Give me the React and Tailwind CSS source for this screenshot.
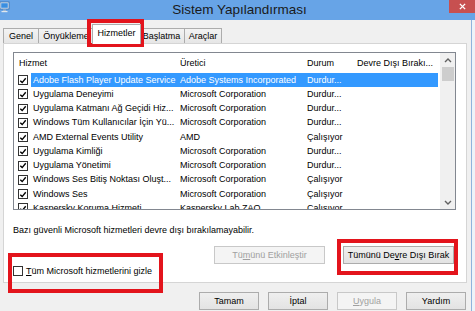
import React from "react";

const rows = [
  ["Adobe Flash Player Update Service", "Adobe Systems Incorporated", "Durdur..."],
  ["Uygulama Deneyimi", "Microsoft Corporation", "Durdur..."],
  ["Uygulama Katmanı Ağ Geçidi Hiz...", "Microsoft Corporation", "Durdur..."],
  ["Windows Tüm Kullanıcılar İçin Yü...", "Microsoft Corporation", "Durdur..."],
  ["AMD External Events Utility", "AMD", "Çalışıyor"],
  ["Uygulama Kimliği", "Microsoft Corporation", "Durdur..."],
  ["Uygulama Yönetimi", "Microsoft Corporation", "Durdur..."],
  ["Windows Ses Bitiş Noktası Oluşt...", "Microsoft Corporation", "Çalışıyor"],
  ["Windows Ses", "Microsoft Corporation", "Çalışıyor"],
  ["Kaspersky Koruma Hizmeti", "Kaspersky Lab ZAO", "Çalışıyor"],
];

function Check({ checked }) {
  return (
    <span className="flex h-[10px] w-[10px] shrink-0 items-center justify-center border border-[#333] bg-white">
      {checked && (
        <svg viewBox="0 0 10 10" className="h-[9px] w-[9px]">
          <path d="M1.6 5.2 L4 7.6 L8.4 2.2" stroke="#000" strokeWidth="1.7" fill="none" />
        </svg>
      )}
    </span>
  );
}

function Tab({ label, width, selected }) {
  if (selected) {
    return (
      <div
        className="relative z-10 -mx-[2px] -mb-px flex h-[20px] items-start justify-center border border-b-0 border-[#acacac] bg-white pt-[4px]"
        style={{ width: width + 4 }}
      >
        {label}
      </div>
    );
  }
  return (
    <div
      className="-ml-px flex h-[15px] items-center justify-center border border-b-0 border-[#acacac] bg-gradient-to-b from-[#f3f3f3] to-[#e6e6e6] pt-px first:ml-0"
      style={{ width }}
    >
      {label}
    </div>
  );
}

function Btn({ children, className = "", disabled }) {
  return (
    <div
      className={
        "flex h-[18px] items-center justify-center border " +
        (disabled
          ? "border-[#c8c8c8] bg-[#f4f4f4] text-[#a0a0a0] "
          : "border-[#acacac] bg-gradient-to-b from-[#efefef] to-[#e3e3e3] ") +
        className
      }
    >
      {children}
    </div>
  );
}

function Chevron({ down }) {
  return (
    <svg viewBox="0 0 8 5" className="h-[5px] w-[8px]">
      <path
        d={down ? "M1 1 L4 4 L7 1" : "M1 4 L4 1 L7 4"}
        stroke="#606060"
        strokeWidth="1.4"
        fill="none"
      />
    </svg>
  );
}

export default function App() {
  return (
    <div className="relative h-[311px] w-[475px] overflow-hidden bg-[#f0f0f0] font-['Liberation_Sans',Arial,sans-serif] text-[9px] leading-none text-black">
      {/* title bar */}
      <div className="flex h-[20px] items-start bg-[#67a4e7]">
        <svg viewBox="0 0 10 12" className="mt-[1px] h-[12px] w-[10px] shrink-0">
          <rect x="0" y="1" width="9" height="7" fill="#e9f2fb" stroke="#3d6ea8" strokeWidth="0.8" />
          <rect x="1.2" y="2.2" width="6.6" height="4.6" fill="#3a8ee0" />
          <rect x="3" y="8.5" width="3" height="1.5" fill="#9fb6cf" />
          <rect x="1.5" y="10" width="6" height="1.2" fill="#dfe7f0" />
        </svg>
        <div className="flex-1 pl-[20px] pt-[3px] text-center text-[13.5px] text-[#1a1a1a]">
          Sistem Yapılandırması
        </div>
        <div className="flex h-[13px] w-[26px] shrink-0 items-center justify-center bg-[#c75050]">
          <svg viewBox="0 0 8 8" className="h-[7px] w-[7px]">
            <path d="M1 1 L7 7 M7 1 L1 7" stroke="#fff" strokeWidth="1.6" />
          </svg>
        </div>
      </div>

      <div className="flex h-[291px]">
        <div className="flex flex-1 flex-col pl-[3px] pr-[4px]">
          {/* tabs */}
          <div className="flex h-[23px] items-end">
            <Tab label="Genel" width={36} />
            <Tab label="Önyükleme" width={56} />
            <Tab label="Hizmetler" width={45} selected />
            <Tab label="Başlatma" width={47} />
            <Tab label="Araçlar" width={38} />
          </div>

          {/* panel */}
          <div className="flex h-[240px] flex-col border border-[#d5d5d5] bg-white pl-[9px] pr-[10px] pt-[8px]">
            <div className="flex h-[158px] border border-[#828790]">
              <div className="flex-1 overflow-hidden pr-[2px]">
                <div className="grid h-[20px] grid-cols-[164px_127px_50px_1fr] items-center pt-[1px]">
                  <span className="pl-[5px]">Hizmet</span>
                  <span className="pl-[2px]">Üretici</span>
                  <span className="pl-[2px]">Durum</span>
                  <span className="pl-[2px]">Devre Dışı Bırakı...</span>
                </div>
                {rows.map((r, i) => (
                  <div key={i} className="grid h-[14.25px] grid-cols-[17px_147px_127px_50px_1fr] items-center">
                    <span className="flex pl-[4px]">
                      <Check checked />
                    </span>
                    <span
                      className={
                        "col-span-4 grid h-full grid-cols-[147px_127px_50px_1fr] items-center " +
                        (i === 0 ? "bg-[#3399ff] text-white" : "")
                      }
                    >
                      <span className="whitespace-nowrap pl-[2px]">{r[0]}</span>
                      <span className="whitespace-nowrap pl-[2px]">{r[1]}</span>
                      <span className="whitespace-nowrap pl-[2px]">{r[2]}</span>
                      <span />
                    </span>
                  </div>
                ))}
              </div>
              {/* scrollbar */}
              <div className="flex w-[15px] flex-col items-center bg-[#f0f0f0]">
                <div className="flex h-[14px] items-center justify-center">
                  <Chevron />
                </div>
                <div className="h-[14px] w-[12px] bg-[#cdcdcd]" />
                <div className="flex-1" />
                <div className="flex h-[14px] items-center justify-center">
                  <Chevron down />
                </div>
              </div>
            </div>

            <div className="mt-[14px] leading-[12px]">
              Bazı güvenli Microsoft hizmetleri devre dışı bırakılamayabilir.
            </div>

            <div className="mr-[2px] mt-[10px] flex justify-end gap-[18px]">
              <Btn disabled className="w-[111px]">
                <span>
                  Tü<span className="underline">m</span>ünü Etkinleştir
                </span>
              </Btn>
              <Btn className="w-[111px]">
                <span>
                  Tümünü De<span className="underline">v</span>re Dışı Bırak
                </span>
              </Btn>
            </div>

            <div className="mt-[2px] flex items-center gap-[3px]">
              <Check />
              <span>
                <span className="underline">T</span>üm Microsoft hizmetlerini gizle
              </span>
            </div>
          </div>

          {/* bottom buttons */}
          <div className="mt-[9px] flex justify-end gap-[9px] pr-[1px]">
            <Btn className="w-[60px]">Tamam</Btn>
            <Btn className="w-[60px]">İptal</Btn>
            <Btn disabled className="w-[60px]">
              <span>
                <span className="underline">U</span>ygula
              </span>
            </Btn>
            <Btn className="w-[60px]">Yardım</Btn>
          </div>
        </div>
        <div className="w-[4px] border-l border-[#8fb3dc] bg-[#eef3f8]" />
      </div>

      {/* red annotation boxes */}
      <div className="absolute left-[87px] top-[19px] h-[28px] w-[57px] border-[4px] border-[#e3141c]" />
      <div className="absolute left-[337px] top-[239px] h-[36px] w-[121px] border-[4px] border-[#e3141c]" />
      <div className="absolute left-[8px] top-[253px] h-[40px] w-[155px] border-[4px] border-[#e3141c]" />
    </div>
  );
}
